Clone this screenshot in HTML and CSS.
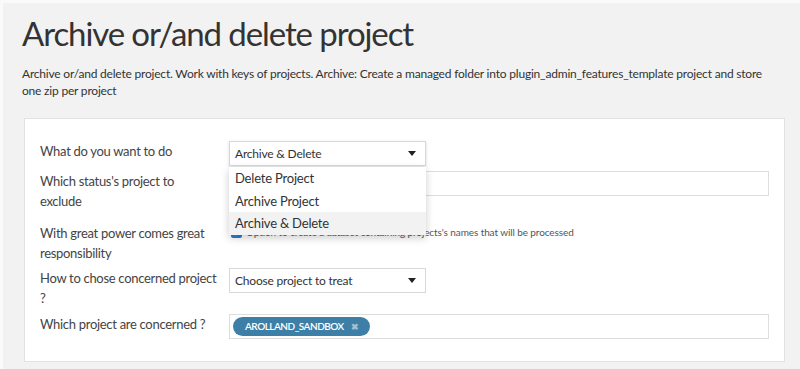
FILE: index.html
```html
<!DOCTYPE html>
<html lang="en">
<head>
    <meta charset="UTF-8">
    <meta name="viewport" content="width=device-width, initial-scale=1.0">
    <title>Archive or/and delete project</title>
    <link rel="stylesheet" href="styles.css">
</head>
<body>
    <div class="page">
        <h1 class="title">Archive or/and delete project</h1>
        <p class="description">Archive or/and delete project. Work with keys of projects. Archive: Create a managed folder into plugin_admin_features_template project and store one zip per project</p>

        <div class="card">
            <div class="form-row">
                <label class="form-label">What do you want to do</label>
                <div class="form-field">
                    <div class="select-wrap">
                        <div class="select open">
                            <span>Archive &amp; Delete</span>
                            <span class="caret"></span>
                        </div>
                        <ul class="dropdown">
                            <li>Delete Project</li>
                            <li>Archive Project</li>
                            <li class="active">Archive &amp; Delete</li>
                        </ul>
                    </div>
                </div>
            </div>

            <div class="form-row">
                <label class="form-label">Which status's project to exclude</label>
                <div class="form-field">
                    <div class="input wide"></div>
                </div>
            </div>

            <div class="form-row row-check">
                <label class="form-label">With great power comes great responsibility</label>
                <div class="form-field">
                    <div class="checkbox-line">
                        <span class="checkbox">
                            <svg width="9" height="9" viewBox="0 0 10 10"><path d="M2 5.2l2 2 4-4.4" fill="none" stroke="#fff" stroke-width="1.6"/></svg>
                        </span>
                        <span class="checkbox-text">Option to create a dataset containing projects's names that will be processed</span>
                    </div>
                </div>
            </div>

            <div class="form-row">
                <label class="form-label">How to chose concerned project ?</label>
                <div class="form-field">
                    <div class="select">
                        <span>Choose project to treat</span>
                        <span class="caret"></span>
                    </div>
                </div>
            </div>

            <div class="form-row row-tags">
                <label class="form-label">Which project are concerned ?</label>
                <div class="form-field">
                    <div class="input wide tags">
                        <span class="tag">AROLLAND_SANDBOX <span class="tag-remove">&#10006;</span></span>
                    </div>
                </div>
            </div>
        </div>
    </div>
</body>
</html>
```

FILE: styles.css
```css
* {
    margin: 0;
    padding: 0;
    box-sizing: border-box;
}

body {
    font-family: 'Source Sans Pro', 'Lato', 'Open Sans', sans-serif;
    background: #f2f2f2;
    color: #333;
    border-left: 3px solid #fafafa;
    border-top: 3px solid #fafafa;
    height: 369px;
    overflow: hidden;
}

.page {
    padding: 10px 15px 0 19px;
}

.title {
    font-size: 33px;
    font-weight: 400;
    color: #333;
    line-height: 40px;
    margin-bottom: 12px;
    letter-spacing: -1.1px;
}

.description {
    font-size: 12px;
    line-height: 17px;
    letter-spacing: -0.2px;
    color: #333;
    margin-bottom: 19px;
    padding-right: 10px;
}

.card {
    background: #fff;
    border: 1px solid #e2e2e2;
    margin-left: 2px;
    padding: 22px 15px 22px 15px;
    display: flex;
    flex-direction: column;
    gap: 5px;
}

.form-row {
    display: flex;
    align-items: flex-start;
}

.row-check {
    margin-top: 7px;
}

.row-tags {
    margin-top: 1px;
}

.form-label {
    width: 189px;
    padding-right: 12px;
    font-size: 13px;
    line-height: 20px;
    letter-spacing: -0.3px;
    color: #444;
    flex-shrink: 0;
}

.form-field {
    flex: 1;
}

.select-wrap {
    position: relative;
    width: 197px;
}

.select {
    width: 197px;
    height: 25px;
    border: 1px solid #d8d8d8;
    background: #fff;
    display: flex;
    align-items: center;
    justify-content: space-between;
    padding: 0 9px 0 5px;
    font-size: 12px;
    letter-spacing: -0.2px;
    color: #333;
}

.select.open {
    box-shadow: 0 1px 3px rgba(0, 0, 0, 0.15);
}

.caret {
    width: 0;
    height: 0;
    border-left: 4px solid transparent;
    border-right: 4px solid transparent;
    border-top: 5px solid #222;
}

.dropdown {
    position: absolute;
    top: 26px;
    left: 0;
    width: 197px;
    list-style: none;
    background: #fff;
    box-shadow: 0 3px 8px rgba(0, 0, 0, 0.2);
    z-index: 10;
}

.dropdown li {
    height: 22.5px;
    line-height: 22px;
    padding-left: 6px;
    font-size: 13px;
    letter-spacing: -0.2px;
    color: #333;
}

.dropdown li.active {
    background: #f2f2f2;
}

.input {
    height: 25px;
    border: 1px solid #dedede;
    background: #fff;
}

.input.wide {
    width: 540px;
}

.checkbox-line {
    display: flex;
    align-items: center;
    gap: 4px;
    padding-top: 3px;
    padding-left: 2px;
}

.checkbox {
    width: 11px;
    height: 11px;
    border-radius: 2px;
    background: #2f7bd6;
    display: flex;
    align-items: center;
    justify-content: center;
}

.checkbox-text {
    font-size: 10px;
    letter-spacing: -0.1px;
    color: #555;
}

.tags {
    display: flex;
    align-items: center;
    padding-left: 3px;
}

.tag {
    background: #3d7fa6;
    color: #fff;
    font-size: 10px;
    font-weight: 600;
    letter-spacing: -0.5px;
    border-radius: 10px;
    height: 19px;
    line-height: 19px;
    padding: 0 11px 0 12px;
    display: inline-flex;
    align-items: center;
    gap: 7px;
}

.tag-remove {
    color: #a3c1d5;
    font-size: 9px;
    letter-spacing: 0;
}
```
